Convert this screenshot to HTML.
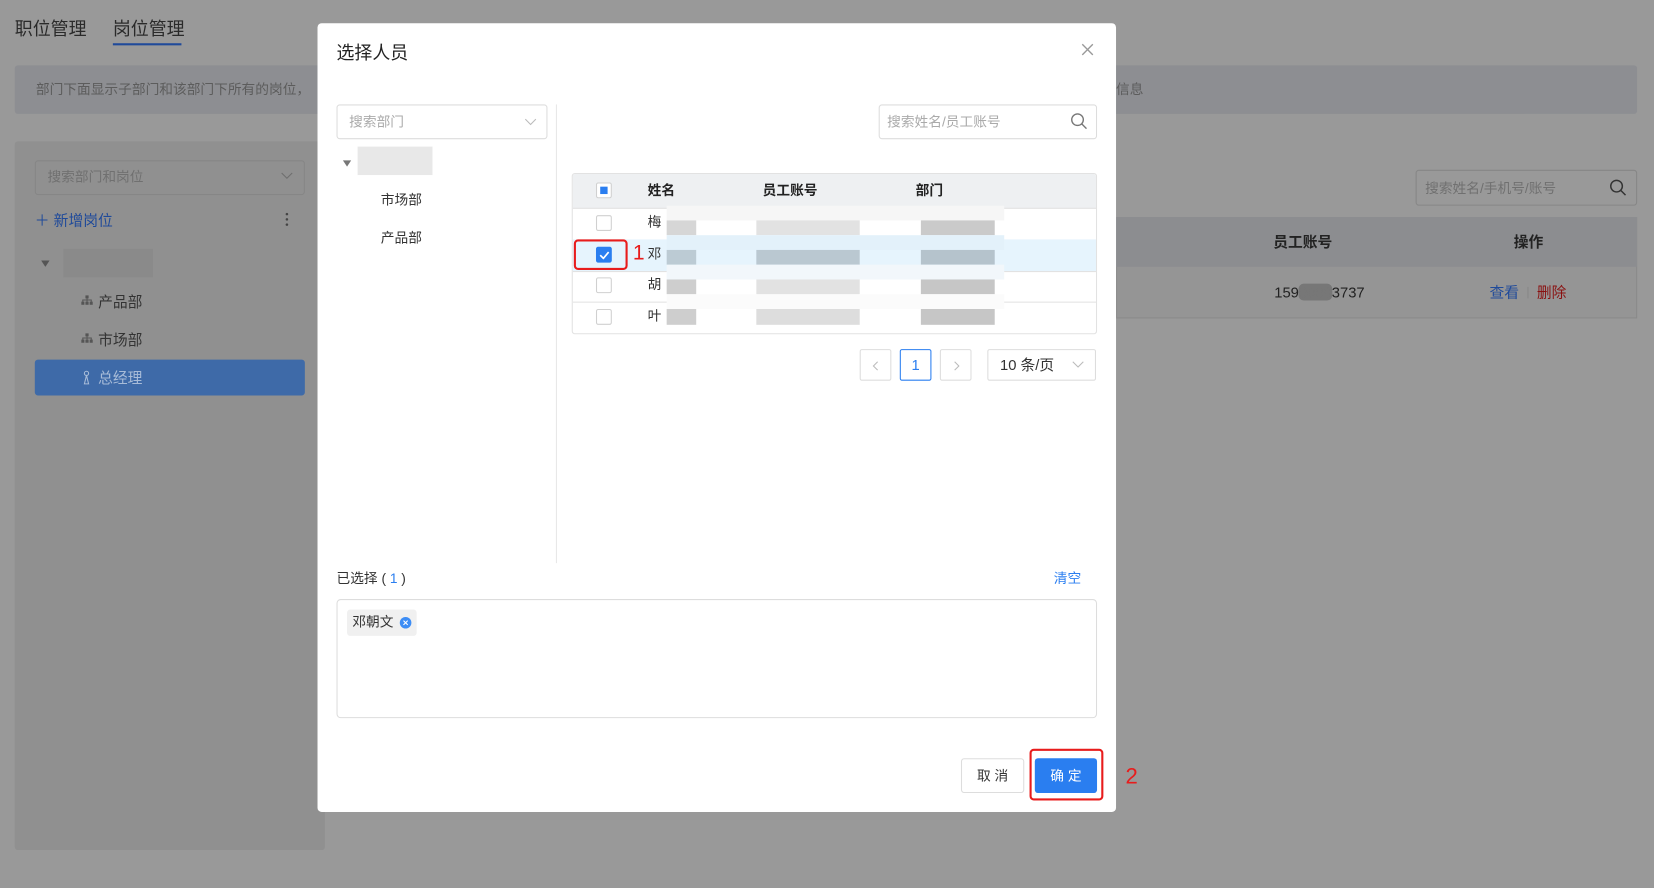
<!DOCTYPE html>
<html><head><meta charset="utf-8"><style>
*{margin:0;padding:0;box-sizing:border-box}
html,body{width:1654px;height:888px;overflow:hidden;background:#999}
body{font-family:"Liberation Sans","Noto Sans CJK SC",sans-serif;color:#333}
#w{position:absolute;left:0;top:0;width:1568px;height:842px;transform:scale(1.05485,1.0546);transform-origin:0 0;background:#999}
.a{position:absolute}
.t{font-size:14px;white-space:nowrap;line-height:16px}
.cb{position:absolute;width:15px;height:15px;border:1px solid #d0d0d0;border-radius:2px;background:#fff}
</style></head><body><div id="w">
<!-- background page -->
<div class="a" style="left:14px;top:18px;font-size:17px;line-height:20px;color:#2a2a2a">职位管理</div>
<div class="a" style="left:107px;top:18px;font-size:17px;line-height:20px;color:#2a2a2a">岗位管理</div>
<div class="a" style="left:107px;top:41px;width:65px;height:2px;background:#1f4a9a"></div>
<div class="a" style="left:14px;top:62px;width:1538px;height:46px;background:#8d8e92;border-radius:3px"></div>
<div class="a t" style="left:34px;top:77px;font-size:13px;color:#5c5c5c">部门下面显示子部门和该部门下所有的岗位，</div>
<div class="a t" style="left:1058px;top:77px;font-size:13px;color:#5c5c5c">信息</div>
<div class="a" style="left:14px;top:134px;width:294px;height:672px;background:#909090;border-radius:3px"></div>
<div class="a" style="left:33px;top:152px;width:256px;height:33px;border:1px solid #868686;border-radius:3px"></div>
<div class="a t" style="left:45px;top:160px;font-size:13px;color:#707070">搜索部门和岗位</div>
<svg class="a" style="left:266px;top:163px" width="12" height="8"><path d="M1 1l5 5 5-5" fill="none" stroke="#6e6e6e" stroke-width="1"/></svg>
<div class="a t" style="left:33px;top:201px;color:#1f4a9a">＋ 新增岗位</div>
<svg class="a" style="left:270px;top:201px" width="4" height="14"><circle cx="2" cy="2" r="1.2" fill="#444"/><circle cx="2" cy="7" r="1.2" fill="#444"/><circle cx="2" cy="12" r="1.2" fill="#444"/></svg>
<svg class="a" style="left:39px;top:247px" width="8" height="6"><path d="M0 0h8L4 6z" fill="#555"/></svg>
<div class="a" style="left:60px;top:236px;width:85px;height:27px;background:#8a8a8a"></div>
<svg class="a" style="left:77px;top:280px" width="11" height="10"><rect x="4" y="0" width="3" height="3" fill="#555"/><rect x="0" y="6" width="3" height="3" fill="#555"/><rect x="4" y="6" width="3" height="3" fill="#555"/><rect x="8" y="6" width="3" height="3" fill="#555"/><path d="M1.5 6V4.5h8V6M5.5 3v3" stroke="#555" fill="none"/></svg>
<div class="a t" style="left:93px;top:278px;color:#333">产品部</div>
<svg class="a" style="left:77px;top:316px" width="11" height="10"><rect x="4" y="0" width="3" height="3" fill="#555"/><rect x="0" y="6" width="3" height="3" fill="#555"/><rect x="4" y="6" width="3" height="3" fill="#555"/><rect x="8" y="6" width="3" height="3" fill="#555"/><path d="M1.5 6V4.5h8V6M5.5 3v3" stroke="#555" fill="none"/></svg>
<div class="a t" style="left:93px;top:314px;color:#333">市场部</div>
<div class="a" style="left:33px;top:341px;width:256px;height:34px;background:#3e6aa8;border-radius:3px"></div>
<svg class="a" style="left:79px;top:351px" width="6" height="14"><circle cx="3" cy="3" r="2" fill="none" stroke="#a8bcd8"/><path d="M3 5l-2 8h4z" fill="none" stroke="#a8bcd8"/></svg>
<div class="a t" style="left:93px;top:350px;color:#a8bcd8">总经理</div>
<div class="a" style="left:1342px;top:161px;width:210px;height:34px;border:1px solid #868686;border-radius:3px"></div>
<div class="a t" style="left:1351px;top:171px;font-size:13px;color:#707070">搜索姓名/手机号/账号</div>
<svg class="a" style="left:1526px;top:170px" width="16" height="16"><circle cx="6.5" cy="6.5" r="5.5" fill="none" stroke="#333" stroke-width="1.4"/><path d="M10.5 10.5l4.5 4.5" stroke="#333" stroke-width="1.4"/></svg>
<div class="a" style="left:1058px;top:206px;width:494px;height:96px;background:#959595;border:1px solid #8a8a8a"></div>
<div class="a" style="left:1058px;top:206px;width:494px;height:47px;background:#8c8d90"></div>
<div class="a t" style="left:1207px;top:221px;color:#222;font-weight:bold">员工账号</div>
<div class="a t" style="left:1435px;top:221px;color:#222;font-weight:bold">操作</div>
<div class="a t" style="left:1208px;top:269px;color:#222">159<span style="background:#777;color:#777;border-radius:5px">0000</span>3737</div>
<div class="a t" style="left:1412px;top:269px;color:#1f4a9a">查看</div>
<div class="a" style="left:1448px;top:272px;width:1px;height:11px;background:#888"></div>
<div class="a t" style="left:1457px;top:269px;color:#8a1010">删除</div>

<!-- modal -->
<div class="a" style="left:301px;top:22px;width:757px;height:748px;background:#fff;border-radius:4px"></div>
<div class="a" style="left:319px;top:41px;font-size:17px;line-height:20px;color:#222">选择人员</div>
<svg class="a" style="left:1025px;top:41px" width="12" height="12"><path d="M1 1l10 10M11 1L1 11" stroke="#999" stroke-width="1.3"/></svg>
<div class="a" style="left:319px;top:99px;width:200px;height:33px;border:1px solid #ddd;border-radius:3px"></div>
<div class="a t" style="left:331px;top:108px;font-size:13px;color:#aaa">搜索部门</div>
<svg class="a" style="left:497px;top:112px" width="12" height="8"><path d="M1 1l5 5 5-5" fill="none" stroke="#bbb"/></svg>
<div class="a" style="left:527px;top:99px;width:1px;height:435px;background:#e8e8e8"></div>
<svg class="a" style="left:325px;top:152px" width="8" height="6"><path d="M0 0h8L4 6z" fill="#777"/></svg>
<div class="a" style="left:339px;top:139px;width:71px;height:27px;background:#e8e8e8"></div>
<div class="a t" style="left:361px;top:182px;font-size:13px;color:#333">市场部</div>
<div class="a t" style="left:361px;top:218px;font-size:13px;color:#333">产品部</div>
<div class="a" style="left:833px;top:99px;width:207px;height:33px;border:1px solid #ddd;border-radius:3px"></div>
<div class="a t" style="left:841px;top:108px;font-size:13px;color:#aaa">搜索姓名/员工账号</div>
<svg class="a" style="left:1015px;top:107px" width="16" height="16"><circle cx="6.5" cy="6.5" r="5.5" fill="none" stroke="#777" stroke-width="1.3"/><path d="M10.5 10.5l4.5 4.5" stroke="#777" stroke-width="1.3"/></svg>
<!-- table -->
<div class="a" style="left:542px;top:164px;width:498px;height:153px;border:1px solid #e2e2e2;border-radius:3px;overflow:hidden">
 <div class="a" style="left:0;top:0;width:498px;height:33px;background:#eef0f2;border-bottom:1px solid #e2e2e2"></div>
 <div class="a" style="left:0;top:62px;width:498px;height:30px;background:#e6f4fd"></div>
 <div class="a" style="left:0;top:92px;width:498px;height:1px;background:#e2e2e2"></div>
 <div class="a" style="left:0;top:121px;width:498px;height:1px;background:#e2e2e2"></div>
</div>
<div class="cb" style="left:565px;top:173px;"><div style="position:absolute;left:3px;top:3px;width:7px;height:7px;background:#2a7ef0"></div></div>
<div class="a t" style="left:614px;top:173px;font-size:13px;font-weight:bold;color:#222">姓名</div>
<div class="a t" style="left:723px;top:173px;font-size:13px;font-weight:bold;color:#222">员工账号</div>
<div class="a t" style="left:868px;top:173px;font-size:13px;font-weight:bold;color:#222">部门</div>
<div class="cb" style="left:565px;top:204px"></div>
<div class="cb" style="left:565px;top:234px;background:#2a7ef0;border-color:#2a7ef0"><svg style="position:absolute;left:2px;top:3px" width="10" height="8"><path d="M1 4l3 3 5-6" fill="none" stroke="#fff" stroke-width="1.6"/></svg></div>
<div class="cb" style="left:565px;top:263px"></div>
<div class="cb" style="left:565px;top:293px"></div>
<div class="a t" style="left:614px;top:203px;font-size:13px">梅</div>
<div class="a t" style="left:614px;top:233px;font-size:13px">邓</div>
<div class="a t" style="left:614px;top:262px;font-size:13px">胡</div>
<div class="a t" style="left:614px;top:292px;font-size:13px">叶</div>
<!-- mosaic -->
<div class="a" style="left:632px;top:195px;width:320px;height:14px;background:#f6f6f6"></div>
<div class="a" style="left:632px;top:209px;width:28px;height:14px;background:#d6d6d6"></div>
<div class="a" style="left:717px;top:209px;width:98px;height:14px;background:#e2e2e2"></div>
<div class="a" style="left:873px;top:209px;width:70px;height:14px;background:#cacaca"></div>
<div class="a" style="left:632px;top:223px;width:320px;height:14px;background:#e3f1fa"></div>
<div class="a" style="left:632px;top:237px;width:28px;height:14px;background:#bccbd4"></div>
<div class="a" style="left:717px;top:237px;width:98px;height:14px;background:#bac8d1"></div>
<div class="a" style="left:873px;top:237px;width:70px;height:14px;background:#b5c3cc"></div>
<div class="a" style="left:632px;top:251px;width:320px;height:14px;background:#f2f7fb"></div>
<div class="a" style="left:632px;top:265px;width:28px;height:14px;background:#cecece"></div>
<div class="a" style="left:717px;top:265px;width:98px;height:14px;background:#e2e2e2"></div>
<div class="a" style="left:873px;top:265px;width:70px;height:14px;background:#c6c6c6"></div>
<div class="a" style="left:632px;top:279px;width:320px;height:14px;background:#fbfbfb"></div>
<div class="a" style="left:632px;top:293px;width:28px;height:15px;background:#cecece"></div>
<div class="a" style="left:717px;top:293px;width:98px;height:15px;background:#dddddd"></div>
<div class="a" style="left:873px;top:293px;width:70px;height:15px;background:#c6c6c6"></div>
<!-- red marker 1 -->
<div class="a" style="left:544px;top:227px;width:51px;height:29px;border:2px solid #e81c1c;border-radius:4px"></div>
<div class="a" style="left:600px;top:229px;font-size:20px;line-height:22px;color:#e81c1c">1</div>
<!-- pagination -->
<div class="a" style="left:815px;top:331px;width:30px;height:30px;border:1px solid #ddd;border-radius:2px"><svg style="position:absolute;left:11px;top:10px" width="6" height="10"><path d="M5 1L1 5l4 4" fill="none" stroke="#bbb"/></svg></div>
<div class="a" style="left:853px;top:331px;width:30px;height:30px;border:1px solid #2a7ef0;border-radius:2px;color:#2a7ef0;text-align:center;line-height:28px;font-size:14px">1</div>
<div class="a" style="left:891px;top:331px;width:30px;height:30px;border:1px solid #ddd;border-radius:2px"><svg style="position:absolute;left:12px;top:10px" width="6" height="10"><path d="M1 1l4 4-4 4" fill="none" stroke="#bbb"/></svg></div>
<div class="a" style="left:936px;top:331px;width:103px;height:30px;border:1px solid #ddd;border-radius:2px"></div>
<div class="a t" style="left:948px;top:338px;color:#333">10 条/页</div>
<svg class="a" style="left:1016px;top:342px" width="12" height="8"><path d="M1 1l5 5 5-5" fill="none" stroke="#bbb"/></svg>
<!-- selected -->
<div class="a t" style="left:319px;top:541px;font-size:13px;color:#333">已选择 ( <span style="color:#2a7ef0">1</span> )</div>
<div class="a t" style="left:999px;top:541px;font-size:13px;color:#2a7ef0">清空</div>
<div class="a" style="left:319px;top:568px;width:721px;height:113px;border:1px solid #ddd;border-radius:4px"></div>
<div class="a" style="left:329px;top:578px;width:66px;height:25px;background:#f0f0f0;border-radius:3px"></div>
<div class="a t" style="left:334px;top:582px;font-size:13px;color:#333">邓朝文</div>
<div class="a" style="left:379px;top:585px;width:11px;height:11px;border-radius:50%;background:#3d8df5"><svg style="position:absolute;left:3px;top:3px" width="5" height="5"><path d="M0.5 0.5l4 4M4.5 0.5l-4 4" stroke="#fff" stroke-width="1"/></svg></div>
<!-- buttons -->
<div class="a" style="left:911px;top:719px;width:60px;height:33px;border:1px solid #ddd;border-radius:3px;text-align:center;line-height:31px;font-size:13px;color:#333">取 消</div>
<div class="a" style="left:981px;top:719px;width:59px;height:33px;background:#2a7ef0;border-radius:3px;text-align:center;line-height:33px;font-size:13px;color:#fff">确 定</div>
<div class="a" style="left:976px;top:710px;width:70px;height:49px;border:2px solid #e81c1c;border-radius:4px"></div>
<div class="a" style="left:1067px;top:726px;font-size:21px;line-height:22px;color:#e81c1c">2</div>
</div></body></html>
